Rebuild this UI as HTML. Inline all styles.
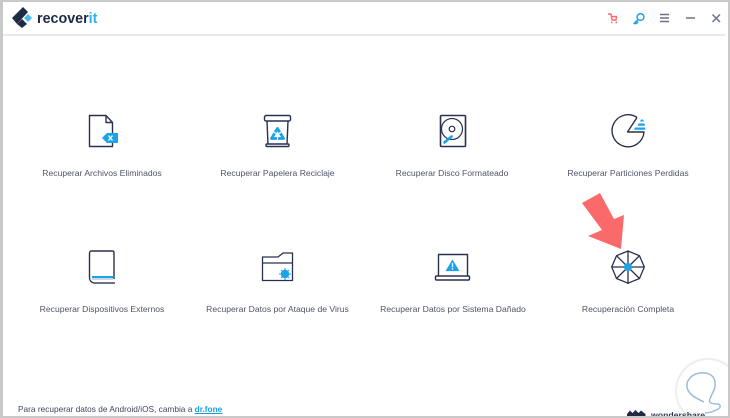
<!DOCTYPE html>
<html><head><meta charset="utf-8"><style>
*{margin:0;padding:0;box-sizing:border-box}
html,body{width:730px;height:418px;overflow:hidden;background:#fff}
body{position:relative;font-family:"Liberation Sans",sans-serif}
.t{position:absolute;transform:translateX(-50%);white-space:nowrap;font-size:8.6px;line-height:12px;color:#4f5468}
svg{position:absolute;left:0;top:0}
.f{position:absolute;background:#c9c9c9}
</style></head><body>
<svg width="730" height="418" viewBox="0 0 730 418" fill="none" stroke-linejoin="round">
<!-- watermark -->
<circle cx="708" cy="391" r="32" stroke="#eceef2" stroke-width="2"/>
<path d="M710 399C712 392 716 390 715 382C714 374 706 372 700 373C692 374 686 380 687 387C688 395 698 399 704 402" stroke="#9dbade" stroke-width="1.5"/>
<path d="M710 399C708 403 712 404 718 404C722 405 720 409 716 410C712 412 708 413 705 413" stroke="#9dbade" stroke-width="1.5"/>
<!-- logo -->
<path d="M12 18L23 7 28 12 17 24Z" fill="#1f2a44"/>
<path d="M24 18L28 14 32 18 28 22Z" fill="#46bdf2"/>
<path d="M17 24L22 19 27 24 22 28Z" fill="#1f2a44"/>
<!-- header icons -->
<g stroke="#f46a6a" stroke-width="1.4"><path d="M608 14h3l1 6h4.500M611.500 16.500h5l-.5 3.500"/><path d="M611 22.500h1.500M615.500 22.500h1.500"/></g>
<g stroke="#1aa3e8" stroke-width="1.500"><circle cx="640.500" cy="17" r="3.400"/><path d="M638 19.500L634 23.500h2.500l1.500-2"/></g>
<g stroke="#6b7289" stroke-width="1.500"><path d="M660 14.500h9M660 18h9M660 21.500h9M686 18h9"/><path d="M712.500 14.500l7.500 7.500M720 14.500l-7.500 7.500"/></g>
<path d="M3 35H725" stroke="#e1e3e7" stroke-width="1.500"/>
<!-- file -->
<g stroke="#2a3150" stroke-width="1.400"><path d="M106 115.500H89.500V146.500H112.500V143M112.500 133V122.500L106 115.500V122.500H112.500"/></g>
<path d="M102 138l5-5h11v10h-11z" fill="#1aa3e8"/><path d="M108.500 135.500l4 5M112.500 135.500l-4 5" stroke="#fff" stroke-width="1.300"/>
<!-- trash -->
<g stroke="#2a3150" stroke-width="1.400"><rect x="264.500" y="115.500" width="26" height="5.500" rx="1.500"/><path d="M267 121l1 23M288 121l-1 23"/><rect x="266" y="144" width="23" height="2.500" rx="1"/></g>
<path d="M277.500 128.500L283.500 138.500H271.500Z" stroke="#1aa3e8" stroke-width="2.800"/>
<path d="M273 131.500l3 2M282 131.500l-3 2M277.500 137v4" stroke="#fff" stroke-width="1.100"/>
<!-- disk -->
<rect x="440.500" y="115.500" width="25" height="31" rx="1" stroke="#2a3150" stroke-width="1.600"/>
<circle cx="452" cy="129" r="10.500" stroke="#2a3150" stroke-width="1.200"/><circle cx="452" cy="129" r="2.800" stroke="#2a3150" stroke-width="1.200"/>
<path d="M444.500 142.500l7-6" stroke="#1aa3e8" stroke-width="2.600" stroke-linecap="round"/>
<!-- pie -->
<path d="M637 117.500A16 16 0 1 0 644 132H627.500L637 117.500" stroke="#2a3150" stroke-width="1.400"/>
<path d="M641 119.500h2l1 2h-4zM638.500 123.500h6l.5 2.200h-7.500zM635 127.500h10l.5 2.200h-11.500z" fill="#1aa3e8"/>
<!-- book -->
<g stroke="#2a3150" stroke-width="1.400"><path d="M89.500 277V253a2 2 0 0 1 2-2h21a1.500 1.500 0 0 1 1.500 1.500V279"/><path d="M89.500 277a5.500 5.500 0 0 0 4 6"/><path d="M93.500 283H115" stroke="#3b4260"/></g>
<rect x="92" y="276" width="21" height="2" fill="#1aa3e8"/><rect x="92" y="278" width="21" height="2" fill="#cfd8e2"/>
<!-- folder -->
<g stroke="#2a3150" stroke-width="1.300"><path d="M262.500 257H278L283 253H292.500V280.500H262.500ZM262.500 263H292.500"/></g>
<circle cx="285" cy="274" r="4.200" fill="#1aa3e8"/>
<path d="M285 268v12M279 274h12M281 270l8 8M289 270l-8 8" stroke="#1aa3e8" stroke-width="1.100"/>
<!-- laptop -->
<g stroke="#2a3150" stroke-width="1.400"><path d="M438.500 276V254.500H467.500V276"/><rect x="435.500" y="276" width="34" height="4" rx="1"/></g>
<path d="M452.500 260.500l6 10h-12z" fill="#1aa3e8" stroke="#1aa3e8" stroke-width="1.200"/><path d="M452.500 263v4.200M452.500 268.300v1.500" stroke="#fff" stroke-width="1.300"/>
<!-- complete -->
<g stroke="#2a3150" stroke-width="1.300"><path d="M628 251l11.500 4.700 4.800 11.300-4.800 11.500-11.500 4.700-11.500-4.700-4.800-11.500 4.800-11.300z"/><path d="M628 251v33M611.700 267h32.600M616.500 255.700l23 22.800M639.500 255.700l-23 22.800"/></g>
<circle cx="628" cy="267" r="4" fill="#1aa3e8"/>
<!-- arrow -->
<path d="M582 203L600 193 614 219 624 215 621 249 588 236 602 230Z" fill="#fb6a6a"/>
<!-- wondershare mark -->
<path d="M627 414l3-3.500 2.500 2.500 3-3 3 3 2.500-2.500 4.500 3.500v2h-18.500z" fill="#232b42"/>
</svg>
<div style="position:absolute;left:37px;top:10px;font-size:14.300px;line-height:18px;font-weight:bold;color:#1f2a44">recover<span style="color:#2eb0ec">it</span></div>
<div class="t" style="left:102px;top:167px">Recuperar Archivos Eliminados</div>
<div class="t" style="left:277.500px;top:167px">Recuperar Papelera Reciclaje</div>
<div class="t" style="left:452px;top:167px">Recuperar Disco Formateado</div>
<div class="t" style="left:628px;top:167px">Recuperar Particiones Perdidas</div>
<div class="t" style="left:102px;top:303px">Recuperar Dispositivos Externos</div>
<div class="t" style="left:277.500px;top:303px">Recuperar Datos por Ataque de Virus</div>
<div class="t" style="left:453px;top:303px">Recuperar Datos por Sistema Dañado</div>
<div class="t" style="left:628px;top:303px">Recuperación Completa</div>
<div style="position:absolute;left:18px;top:403px;font-size:8.300px;line-height:12px;color:#3f4560;white-space:nowrap">Para recuperar datos de Android/iOS, cambia a <b style="color:#1b9fe0;text-decoration:underline">dr.fone</b></div>
<div style="position:absolute;left:651px;top:409px;font-size:8.700px;line-height:12px;font-weight:bold;color:#333a50;white-space:nowrap">wondershare</div>
<div class="f" style="left:0;top:0;width:730px;height:2px"></div>
<div class="f" style="left:0;top:0;width:3px;height:418px"></div>
<div class="f" style="right:0;top:0;width:2px;height:418px"></div>
<div class="f" style="left:0;bottom:0;width:730px;height:2px"></div>
</body></html>
